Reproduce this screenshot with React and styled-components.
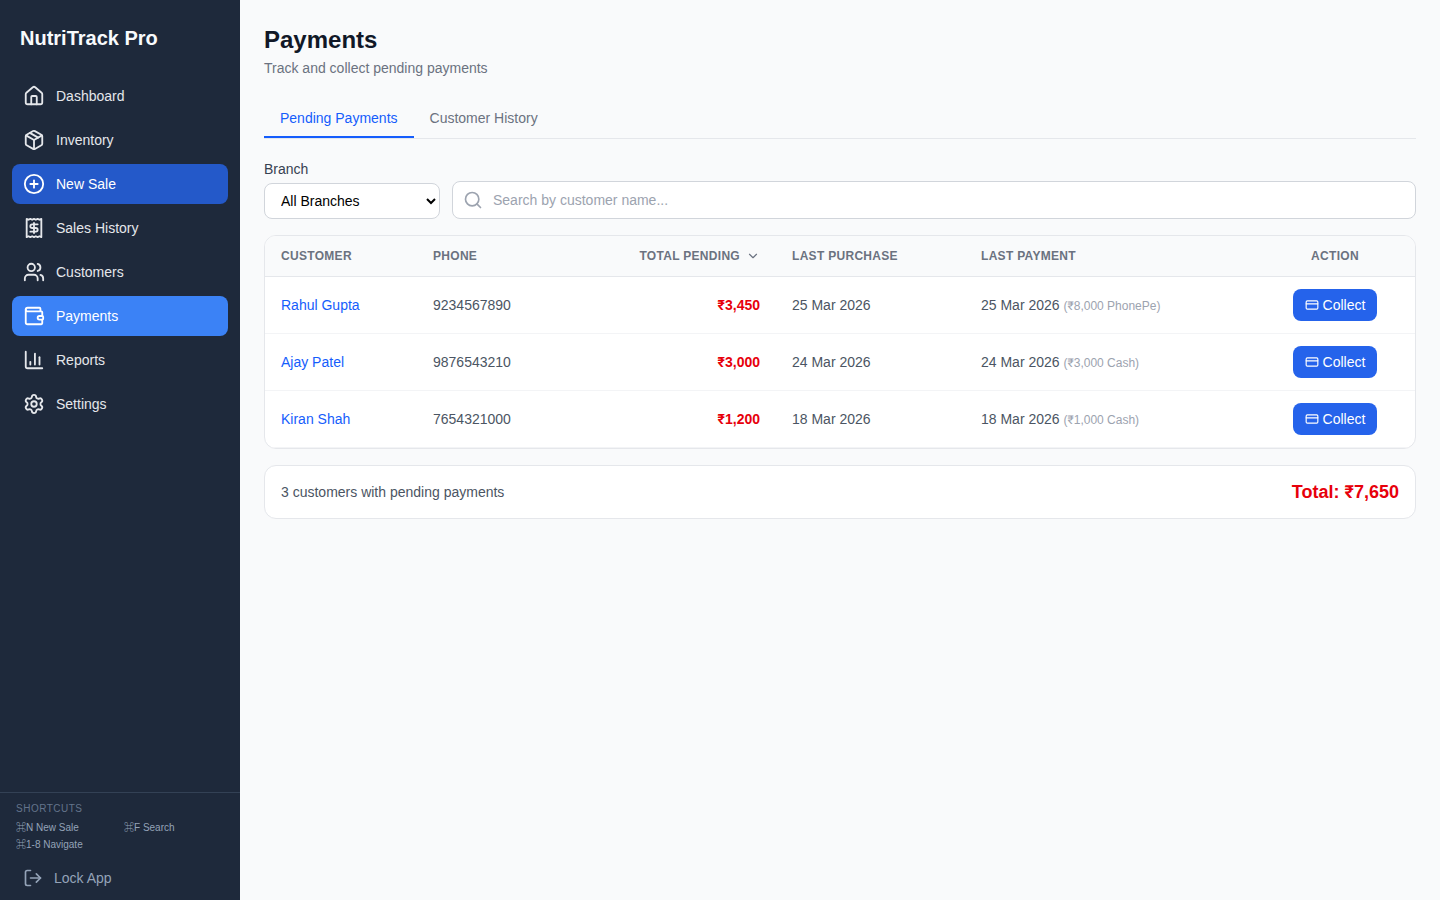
import React from "react";
import styled, { createGlobalStyle } from "styled-components";
import { House, Package, CirclePlus, Receipt, Users, Wallet, ChartColumn, Settings, LogOut, Search, CreditCard, ChevronDown } from "lucide-react";

const FONT = `Arial, "Liberation Sans", Roboto, "Noto Sans CJK SC", sans-serif`;
const Global = createGlobalStyle`
  * { box-sizing: border-box; }
  html, body { margin: 0; padding: 0; height: 100%; }
  body { font-family: ${FONT}; background: #f9fafb; }
`;
const Layout = styled.div`display: flex; height: 900px; overflow: hidden;`;
const Sidebar = styled.aside`width: 240px; flex: none; background: #1e293b; color: #fff; display: flex; flex-direction: column;`;
const Brand = styled.div`font-size: 20px; line-height: 28px; font-weight: 700; padding: 24px 20px 24px; color: #f8fafc;`;
const Nav = styled.nav`flex: 1; display: flex; flex-direction: column; gap: 4px; padding: 0 12px;`;
const NavItem = styled.a`
  height: 40px; display: flex; align-items: center; gap: 11px; padding: 0 11px; border-radius: 8px;
  font-size: 14px; color: ${p => p.$bg ? "#fff" : "#e5e7eb"}; background: ${p => p.$bg || "transparent"};
`;
const Foot = styled.div`border-top: 1px solid #334155; padding: 10px 16px 0; height: 108px;`;
const FootTitle = styled.div`font-size: 10px; line-height: 12px; letter-spacing: 0.5px; color: #64748b; margin-bottom: 5px;`;
const Shortcuts = styled.div`display: grid; grid-template-columns: 108px 1fr; row-gap: 2px; font-size: 10px; line-height: 15px; color: #94a3b8;`;
const Lock = styled.div`display: flex; align-items: center; gap: 11px; font-size: 14px; line-height: 20px; color: #94a3b8; padding: 16px 7px 0;`;
const Main = styled.main`flex: 1; min-width: 0; padding: 24px; background: #f9fafb;`;
const Title = styled.h1`margin: 0; font-size: 24px; line-height: 32px; font-weight: 700; color: #111827;`;
const Sub = styled.p`margin: 2px 0 22px; font-size: 14px; line-height: 20px; color: #6b7280;`;
const Tabs = styled.div`display: flex; border-bottom: 1px solid #e5e7eb; margin-bottom: 20px; height: 39px;`;
const Tab = styled.div`
  padding: 0 16px; height: 38px; display: flex; align-items: center; font-size: 14px; line-height: 20px;
  color: ${p => p.$active ? "#155dfc" : "#6b7280"};
  border-bottom: 2px solid ${p => p.$active ? "#155dfc" : "transparent"};
`;
const Filters = styled.div`display: flex; align-items: flex-end; gap: 12px; margin-bottom: 16px;`;
const Field = styled.div`display: flex; flex-direction: column; gap: 4px;`;
const Label = styled.label`font-size: 14px; line-height: 20px; color: #374151;`;
const Select = styled.select`
  width: 176px; height: 36px; padding: 0 12px; border: 1px solid #d1d5db; border-radius: 8px; background: #fff;
  font: 14px ${FONT}; color: #000;
`;
const SearchBox = styled.div`flex: 1; height: 38px; border: 1px solid #d1d5db; border-radius: 8px; background: #fff; display: flex; align-items: center; gap: 10px; padding: 0 10px; color: #9ca3af;`;
const SearchInput = styled.input`
  flex: 1; border: 0; outline: 0; padding: 0; background: transparent; font: 14px ${FONT};
  &::placeholder { color: #9ca3af; opacity: 1; }
`;
const Card = styled.div`background: #fff; border: 1px solid #e5e7eb; border-radius: 12px; overflow: hidden;`;
const Table = styled.table`
  width: 100%; border-collapse: separate; border-spacing: 0; table-layout: fixed;
  & col:nth-child(1), & col:nth-child(2) { width: 152px; }
  & col:nth-child(3) { width: 207px; }
  & col:nth-child(4) { width: 189px; }
  & col:nth-child(5) { width: 290px; }
  & col:nth-child(6) { width: 160px; }
`;
const Th = styled.th`
  height: 41px; padding: 0 16px; background: #f9fafb; border-bottom: 1px solid #e5e7eb; font-size: 12px; font-weight: 700;
  letter-spacing: 0.3px; color: #6b7280; text-align: ${p => p.$align || "left"}; text-transform: uppercase;
`;
const Td = styled.td`height: 57px; padding: 0 16px; border-bottom: 1px solid #f3f4f6; font-size: 14px; color: #4b5563; text-align: ${p => p.$align || "left"};`;
const Name = styled.a`color: #155dfc;`;
const Amount = styled.span`color: #e7000b; font-weight: 700;`;
const Note = styled.span`font-size: 12px; color: #9ca3af;`;
const Collect = styled.button`
  display: inline-flex; align-items: center; gap: 4px; height: 32px; padding: 0 12px; border: 0; border-radius: 8px; vertical-align: middle;
  background: #2563eb; color: #fff; font: 14px ${FONT};
`;
const Summary = styled(Card)`margin-top: 16px; height: 54px; display: flex; justify-content: space-between; align-items: center; padding: 0 16px; font-size: 14px; color: #4b5563;`;
const Total = styled.span`font-size: 18px; font-weight: 700; color: #e7000b;`;
const SortIcon = styled(ChevronDown)`vertical-align: -3px; margin-left: 6px;`;

const nav = [
  [House, "Dashboard"], [Package, "Inventory"], [CirclePlus, "New Sale", "#2459c9"], [Receipt, "Sales History"],
  [Users, "Customers"], [Wallet, "Payments", "#3b82f6"], [ChartColumn, "Reports"], [Settings, "Settings"],
];
const rows = [
  ["Rahul Gupta", "9234567890", "₹3,450", "25 Mar 2026", "25 Mar 2026", "(₹8,000 PhonePe)"],
  ["Ajay Patel", "9876543210", "₹3,000", "24 Mar 2026", "24 Mar 2026", "(₹3,000 Cash)"],
  ["Kiran Shah", "7654321000", "₹1,200", "18 Mar 2026", "18 Mar 2026", "(₹1,000 Cash)"],
];

export default function App() {
  return (
    <Layout>
      <Global />
      <Sidebar>
        <Brand>NutriTrack Pro</Brand>
        <Nav>
          {nav.map(([I, label, bg]) => (
            <NavItem key={label} $bg={bg}><I size={22} />{label}</NavItem>
          ))}
        </Nav>
        <Foot>
          <FootTitle>SHORTCUTS</FootTitle>
          <Shortcuts>
            <span>⌘N New Sale</span><span>⌘F Search</span><span>⌘1-8 Navigate</span>
          </Shortcuts>
          <Lock><LogOut size={20} />Lock App</Lock>
        </Foot>
      </Sidebar>
      <Main>
        <Title>Payments</Title>
        <Sub>Track and collect pending payments</Sub>
        <Tabs>
          <Tab $active>Pending Payments</Tab>
          <Tab>Customer History</Tab>
        </Tabs>
        <Filters>
          <Field>
            <Label>Branch</Label>
            <Select defaultValue="all"><option value="all">All Branches</option></Select>
          </Field>
          <SearchBox>
            <Search size={20} />
            <SearchInput placeholder="Search by customer name..." />
          </SearchBox>
        </Filters>
        <Card>
          <Table>
            <colgroup><col /><col /><col /><col /><col /><col /></colgroup>
            <thead>
              <tr>
                <Th>Customer</Th><Th>Phone</Th>
                <Th $align="right">Total Pending<SortIcon size={14} /></Th>
                <Th>Last Purchase</Th><Th>Last Payment</Th><Th $align="center">Action</Th>
              </tr>
            </thead>
            <tbody>
              {rows.map(r => (
                <tr key={r[0]}>
                  <Td><Name>{r[0]}</Name></Td>
                  <Td>{r[1]}</Td>
                  <Td $align="right"><Amount>{r[2]}</Amount></Td>
                  <Td>{r[3]}</Td>
                  <Td>{r[4]} <Note>{r[5]}</Note></Td>
                  <Td $align="center"><Collect><CreditCard size={14} />Collect</Collect></Td>
                </tr>
              ))}
            </tbody>
          </Table>
        </Card>
        <Summary>
          <span>3 customers with pending payments</span>
          <Total>Total: ₹7,650</Total>
        </Summary>
      </Main>
    </Layout>
  );
}
